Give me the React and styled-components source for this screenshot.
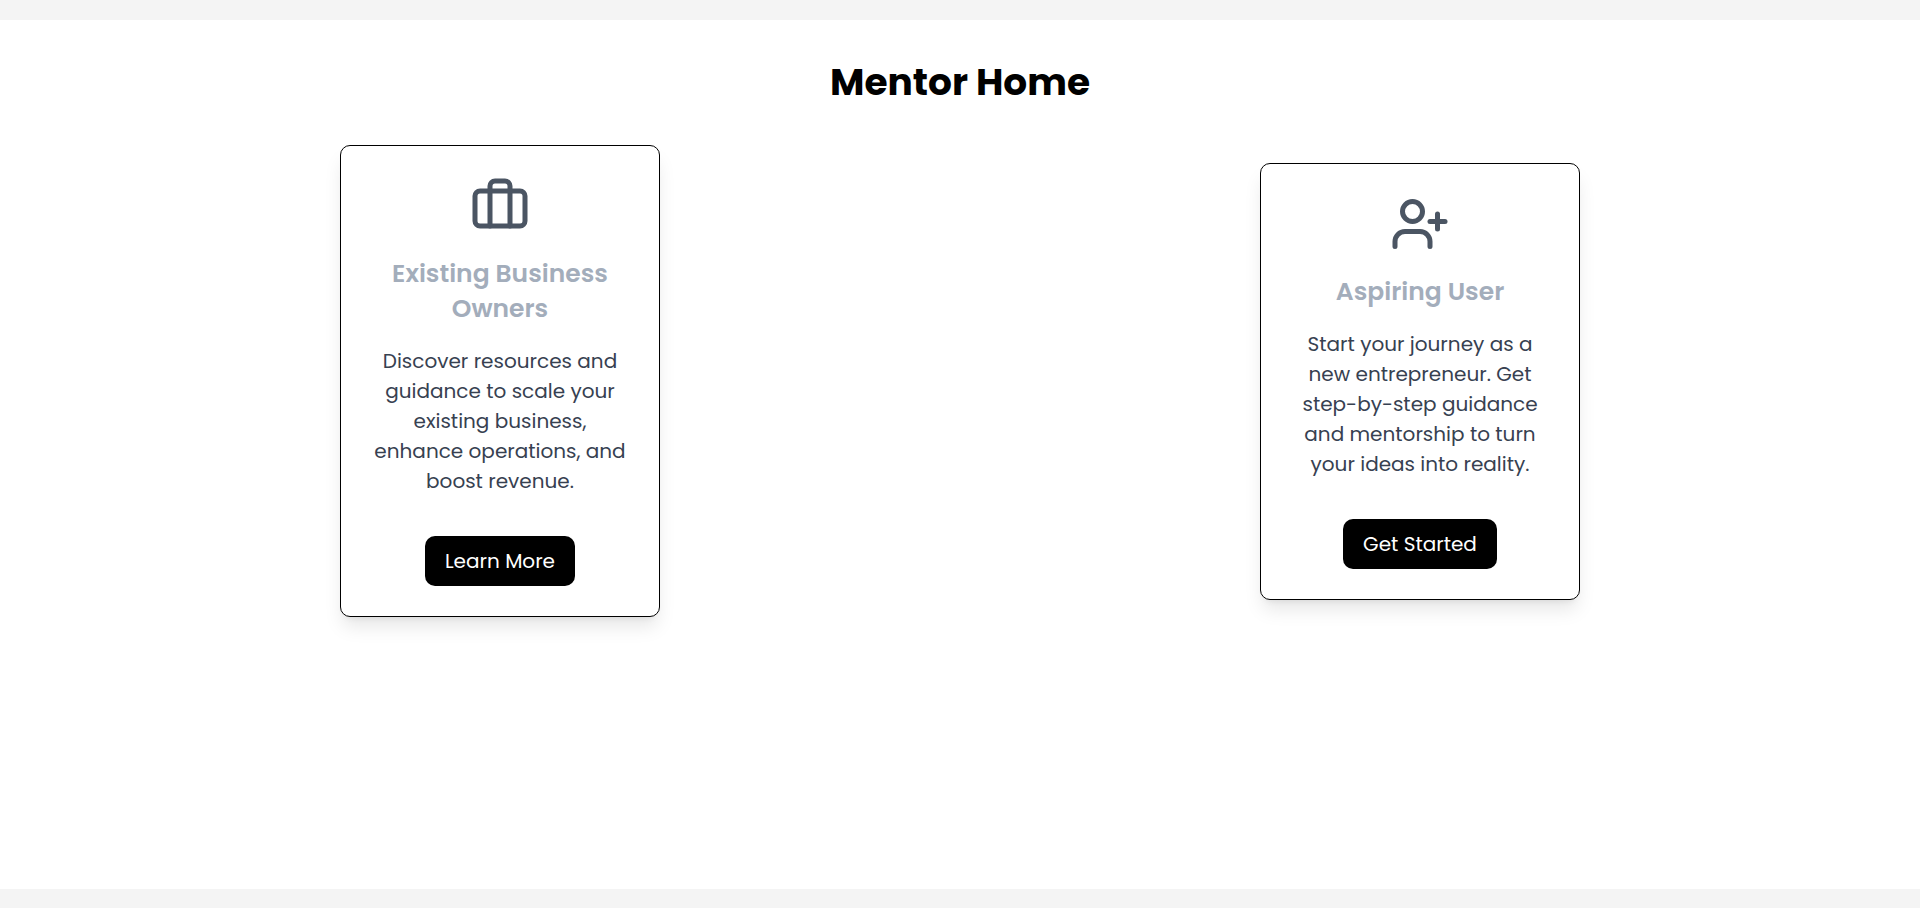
import React from 'react';
import styled, { createGlobalStyle } from 'styled-components';
import { Briefcase, UserPlus } from 'lucide-react';

const GlobalStyle = createGlobalStyle`
  *, *::before, *::after { box-sizing: border-box; }
  html { font-size: 20px; }
  body {
    margin: 0;
    background: #f4f4f4;
    font-family: Poppins, Inter, "Liberation Sans", sans-serif;
    line-height: 1.5;
  }
  h1, h2, p { margin: 0; }
`;

const Page = styled.div`
  height: 100vh;
  padding: 20px 0 19px;
  display: flex;
`;

const Panel = styled.main`
  flex: 1;
  padding: 2rem;
  background: #fff;
`;

const PageTitle = styled.h1`
  margin-bottom: 2rem;
  color: #000;
  font-size: 37.5px;
  font-weight: 700;
  line-height: 45px;
  text-align: center;
`;

const CardRow = styled.div`
  display: flex;
  justify-content: space-around;
  align-items: center;
`;

const Card = styled.section`
  width: 16rem;
  padding: 1.5rem;
  display: flex;
  flex-direction: column;
  align-items: center;
  border: 1px solid #000;
  border-radius: 10px;
  background: #fff;
  box-shadow: 0 12.5px 18.75px -3.75px rgba(0, 0, 0, 0.1), 0 5px 7.5px -5px rgba(0, 0, 0, 0.1);
  text-align: center;
`;

const CardIcon = styled.div`
  height: 60px;
  margin-bottom: 1rem;
  color: #4b5563;

  svg { display: block; }
`;

const CardTitle = styled.h2`
  margin-bottom: 1rem;
  color: #a3adbb;
  font-size: 25px;
  font-weight: 600;
  line-height: 35px;
`;

const CardText = styled.p`
  margin-bottom: 2rem;
  color: #374151;
  font-size: 20px;
  line-height: 30px;
`;

const Button = styled.button`
  height: 50px;
  padding: 0 1rem;
  border: 0;
  border-radius: 10px;
  background: #000;
  color: #fff;
  font: inherit;
  cursor: pointer;
`;

const cards = [
  {
    Icon: Briefcase,
    title: 'Existing Business Owners',
    text: 'Discover resources and guidance to scale your existing business, enhance operations, and boost revenue.',
    action: 'Learn More',
  },
  {
    Icon: UserPlus,
    title: 'Aspiring User',
    text: 'Start your journey as a new entrepreneur. Get step-by-step guidance and mentorship to turn your ideas into reality.',
    action: 'Get Started',
  },
];

export default function App() {
  return (
    <>
      <GlobalStyle />
      <Page>
        <Panel>
          <PageTitle>Mentor Home</PageTitle>
          <CardRow>
            {cards.map(({ Icon, title, text, action }) => (
              <Card key={title}>
                <CardIcon><Icon size={60} strokeWidth={2} /></CardIcon>
                <CardTitle>{title}</CardTitle>
                <CardText>{text}</CardText>
                <Button>{action}</Button>
              </Card>
            ))}
          </CardRow>
        </Panel>
      </Page>
    </>
  );
}
